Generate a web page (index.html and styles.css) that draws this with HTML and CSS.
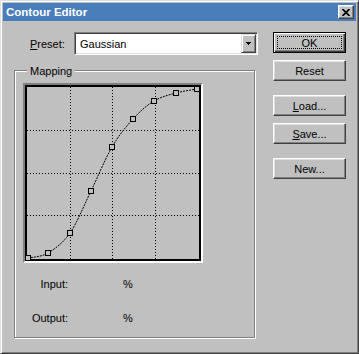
FILE: index.html
```html
<!DOCTYPE html>
<html lang="en">
<head>
    <meta charset="UTF-8">
    <title>Contour Editor</title>
    <link rel="stylesheet" href="styles.css">
</head>
<body>
    <div class="window">
        <div class="titlebar">
            <span class="title">Contour Editor</span>
            <div class="close-btn">
                <svg width="8" height="7" viewBox="0 0 8 7">
                    <path d="M0.5 0 L7.5 7 M7.5 0 L0.5 7" stroke="#000" stroke-width="1.7"/>
                </svg>
            </div>
        </div>

        <div class="dialog">
            <div class="left">
                <div class="preset-row">
                    <label class="preset-label"><u>P</u>reset:</label>
                    <div class="combo">
                        <div class="combo-field">
                            <span class="combo-text">Gaussian</span>
                            <div class="drop-btn">
                                <svg width="5" height="3" viewBox="0 0 5 3" shape-rendering="crispEdges">
                                    <rect x="0" y="0" width="5" height="1"/>
                                    <rect x="1" y="1" width="3" height="1"/>
                                    <rect x="2" y="2" width="1" height="1"/>
                                </svg>
                            </div>
                        </div>
                    </div>
                </div>

                <div class="group">
                    <span class="group-title">Mapping</span>
                    <div class="graph">
                        <div class="plot">
                            <svg width="172" height="172" viewBox="0 0 172 172">
                                <g class="grid">
                                    <line x1="43.5" y1="0" x2="43.5" y2="172"/>
                                    <line x1="85.5" y1="0" x2="85.5" y2="172"/>
                                    <line x1="128.5" y1="0" x2="128.5" y2="172"/>
                                    <line x1="0" y1="43.5" x2="172" y2="43.5"/>
                                    <line x1="0" y1="86.5" x2="172" y2="86.5"/>
                                    <line x1="0" y1="128.5" x2="172" y2="128.5"/>
                                </g>
                                <path class="curve" d="M1 171 C4.3 170.2 14 170.2 21 166 C28 161.8 35.8 156.3 43 146 C50.2 135.7 57 118.3 64 104 C71 89.7 78 72 85 60 C92 48 99 39.7 106 32 C113 24.3 119.8 18.3 127 14 C134.2 9.7 141.8 8 149 6 C156.2 4 166.5 2.7 170 2"/>
                                <g class="pts">
                                    <rect x="-1.5" y="168.5" width="5" height="5"/>
                                    <rect x="18.5" y="163.5" width="5" height="5"/>
                                    <rect x="40.5" y="143.5" width="5" height="5"/>
                                    <rect x="61.5" y="101.5" width="5" height="5"/>
                                    <rect x="82.5" y="57.5" width="5" height="5"/>
                                    <rect x="103.5" y="29.5" width="5" height="5"/>
                                    <rect x="124.5" y="11.5" width="5" height="5"/>
                                    <rect x="146.5" y="3.5" width="5" height="5"/>
                                    <rect x="167.5" y="-0.5" width="5" height="5"/>
                                </g>
                            </svg>
                        </div>
                    </div>

                    <div class="readout">
                        <span class="lbl">Input:</span>
                        <span>%</span>
                        <span class="lbl">Output:</span>
                        <span>%</span>
                    </div>
                </div>
            </div>

            <div class="buttons">
                <button class="btn btn-default"><span class="focus-ring"></span>OK</button>
                <button class="btn gap-sm">Reset</button>
                <button class="btn gap-lg"><u>L</u>oad...</button>
                <button class="btn gap-sm"><u>S</u>ave...</button>
                <button class="btn gap-lg">New...</button>
            </div>
        </div>
    </div>
</body>
</html>
```

FILE: styles.css
```css
* {
    box-sizing: border-box;
}
body {
    margin: 0;
    background: #c0c0c0;
    font-family: "Liberation Sans", Arial, sans-serif;
    font-size: 11px;
    color: #000;
}
.window {
    width: 359px;
    height: 354px;
    padding: 2px;
    background: #c0c0c0;
    border: 1px solid;
    border-color: #dfdfdf #404040 #404040 #dfdfdf;
    box-shadow: inset 1px 1px 0 #fff, inset -1px -1px 0 #808080;
}
.titlebar {
    height: 18px;
    background: #4a7eba;
    display: flex;
    align-items: center;
    justify-content: space-between;
    padding: 0 2px 0 3px;
}
.title {
    color: #fff;
    font-weight: bold;
    font-size: 11.5px;
}
.close-btn {
    width: 16px;
    height: 14px;
    background: #c0c0c0;
    border: 1px solid;
    border-color: #fff #404040 #404040 #fff;
    box-shadow: inset -1px -1px 0 #808080, inset 1px 1px 0 #dfdfdf;
    display: flex;
    align-items: center;
    justify-content: center;
}
.close-btn svg {
    display: block;
}
.dialog {
    display: flex;
    gap: 15px;
    padding: 11px 0 0 11px;
}
.left {
    width: 244px;
}
.preset-row {
    display: flex;
    align-items: center;
    height: 23px;
}
.preset-label {
    width: 44px;
    margin-left: 16px;
}
.combo {
    width: 184px;
    height: 23px;
    padding: 1px;
    border: 1px solid;
    border-color: #808080 #fff #fff #808080;
    box-shadow: inset 1px 1px 0 #404040, inset -1px -1px 0 #dfdfdf;
}
.combo-field {
    height: 100%;
    display: flex;
    align-items: center;
    background: #fff;
}
.combo-text {
    flex: 1;
    padding-left: 4px;
}
.drop-btn {
    width: 15px;
    height: 19px;
    background: #c0c0c0;
    border: 1px solid;
    border-color: #dfdfdf #404040 #404040 #dfdfdf;
    box-shadow: inset 1px 1px 0 #fff, inset -1px -1px 0 #808080;
    display: flex;
    align-items: center;
    justify-content: center;
}
.drop-btn svg {
    display: block;
}
.group {
    position: relative;
    margin-top: 15px;
    width: 241px;
    height: 268px;
    padding: 12px 0 0 8px;
    border: 1px solid #808080;
    box-shadow: 1px 1px 0 #fff, inset 1px 1px 0 #fff;
}
.group-title {
    position: absolute;
    top: -6px;
    left: 12px;
    padding: 0 3px;
    line-height: 13px;
    background: #c0c0c0;
}
.graph {
    width: 180px;
    height: 180px;
    border: 2px solid;
    border-color: #808080 #fff #fff #808080;
}
.plot {
    width: 176px;
    height: 176px;
    border: 2px solid #000;
}
.plot svg {
    display: block;
    overflow: visible;
}
.grid line {
    stroke: #000;
    stroke-width: 1;
    stroke-dasharray: 1 2;
    shape-rendering: crispEdges;
}
.curve {
    fill: none;
    stroke: #000;
    stroke-width: 1;
    stroke-dasharray: 2 1;
}
.pts rect {
    fill: #c0c0c0;
    stroke: #000;
    stroke-width: 1;
    shape-rendering: crispEdges;
}
.readout {
    display: grid;
    grid-template-columns: 45px auto;
    column-gap: 55px;
    row-gap: 21px;
    margin-top: 15px;
    line-height: 13px;
}
.readout .lbl {
    text-align: right;
}
.buttons {
    display: flex;
    flex-direction: column;
    width: 73px;
}
.btn {
    position: relative;
    height: 21px;
    padding: 0;
    font: inherit;
    color: #000;
    background: #c0c0c0;
    border: 1px solid;
    border-color: #fff #404040 #404040 #fff;
    box-shadow: inset -1px -1px 0 #808080, inset 1px 1px 0 #dfdfdf;
    display: flex;
    align-items: center;
    justify-content: center;
}
.btn-default {
    border-color: #000;
    box-shadow: inset 1px 1px 0 #fff, inset -1px -1px 0 #404040, inset -2px -2px 0 #808080;
}
.focus-ring {
    position: absolute;
    top: 3px;
    right: 3px;
    bottom: 3px;
    left: 3px;
    border: 1px dotted #000;
}
.gap-sm {
    margin-top: 7px;
}
.gap-lg {
    margin-top: 14px;
}
```
